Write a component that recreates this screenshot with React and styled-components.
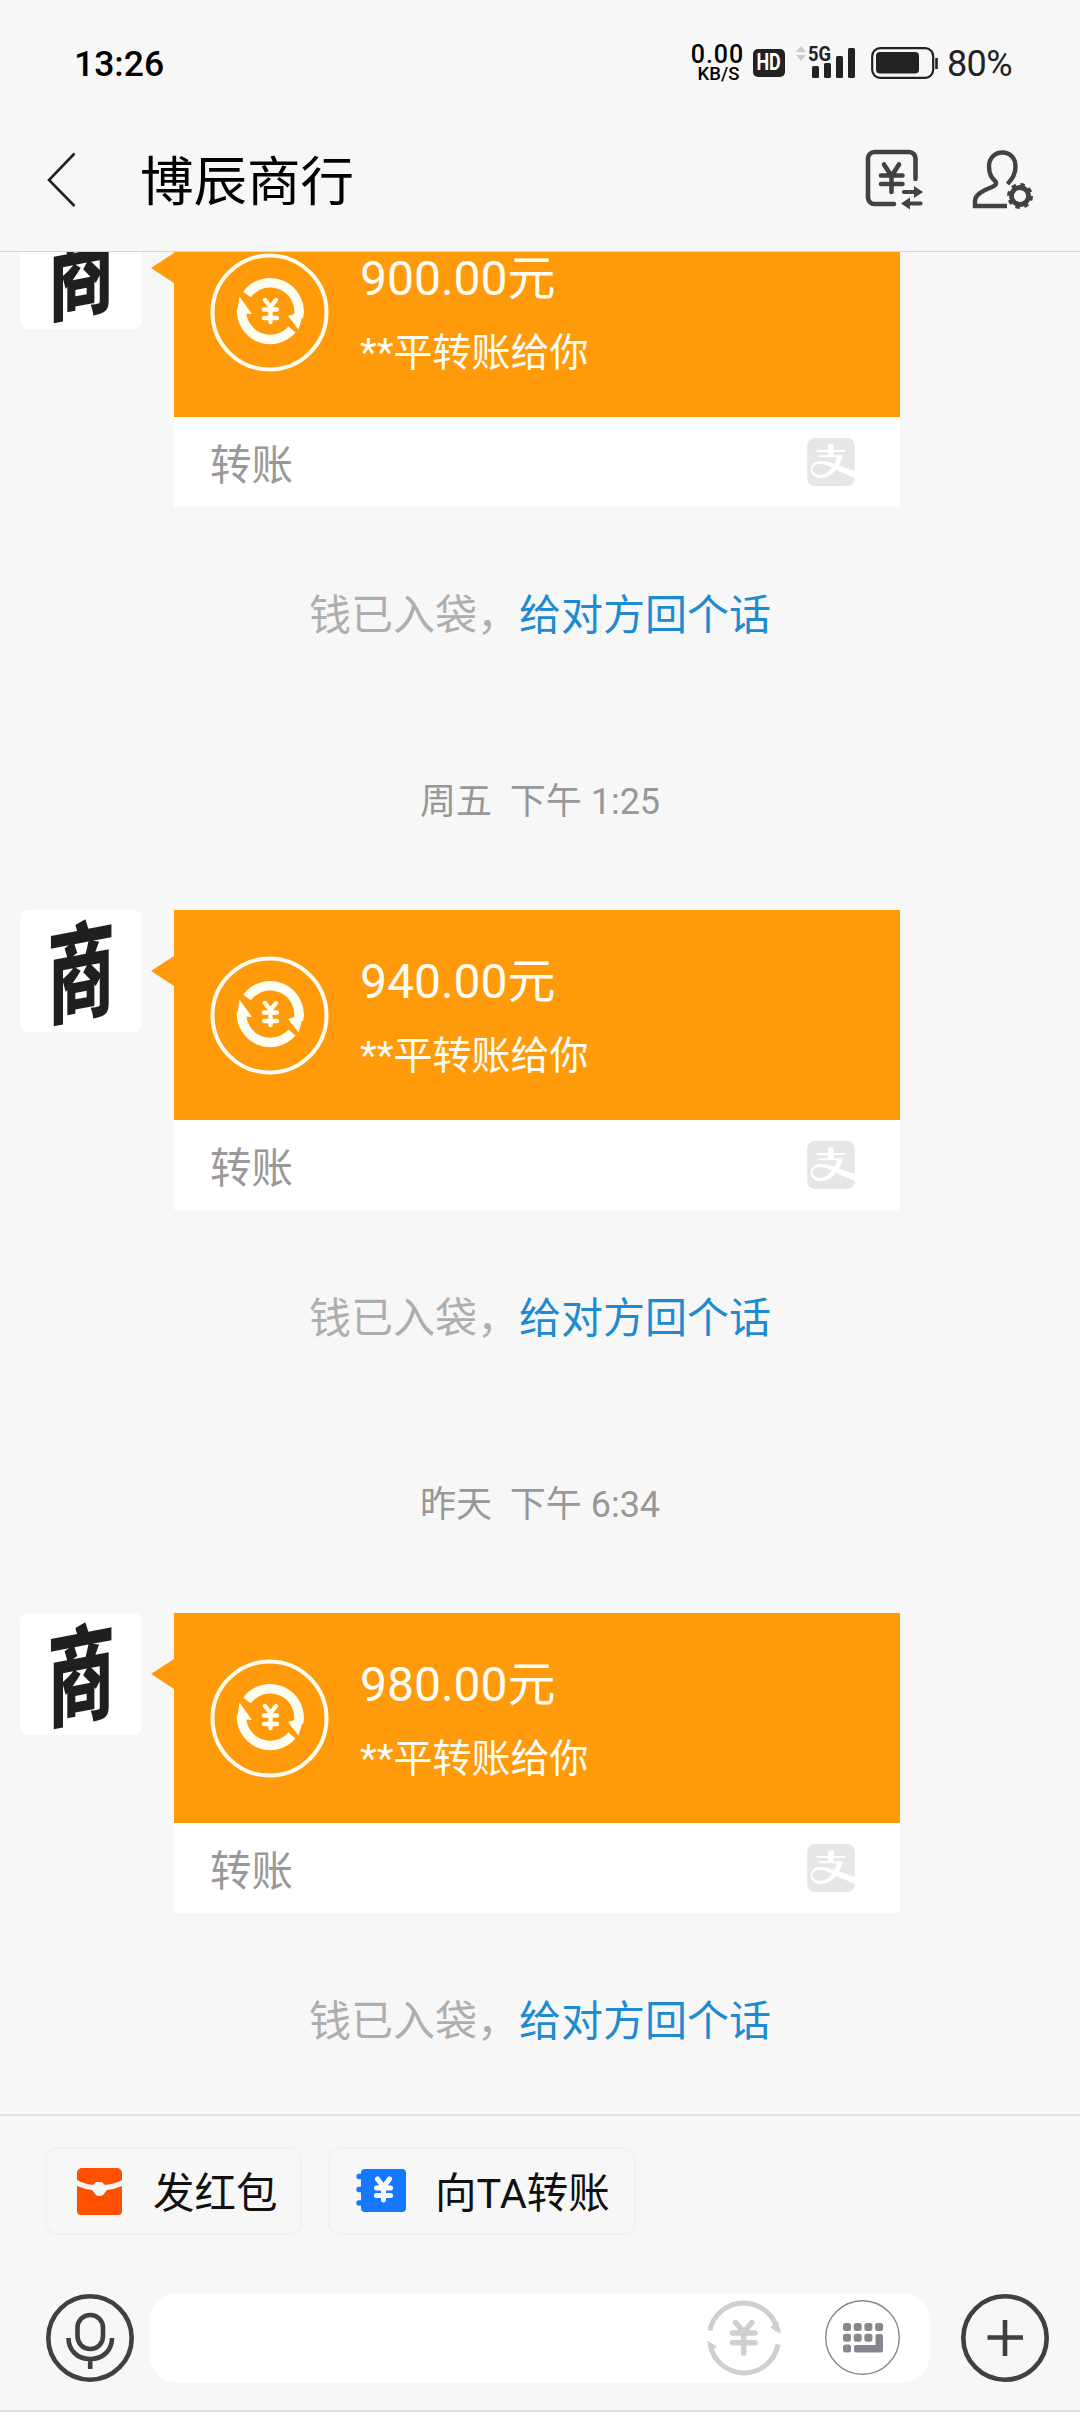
import React from 'react';
import styled, { createGlobalStyle } from 'styled-components';
import { SiAlipay } from 'react-icons/si';

const GlobalStyle = createGlobalStyle`
  * {
    box-sizing: border-box;
  }
  body {
    margin: 0;
    background: #f7f7f7;
    font-family: Roboto, "Noto Sans CJK SC", sans-serif;
  }
  svg {
    display: block;
    flex: none;
    overflow: visible;
  }
`

const Screen = styled.div`
  width: 1080px;
  height: 2412px;
  display: flex;
  flex-direction: column;
  overflow: hidden;
  background: #f7f7f7;
`

const StatusBar = styled.div`
  height: 128px;
  padding: 0 68px 0 74px;
  display: flex;
  align-items: center;
  justify-content: space-between;
`

const Clock = styled.div`
  font-size: 35.5px;
  font-weight: 500;
  color: #000;
`

const StatusRight = styled.div`
  display: flex;
  align-items: center;
`

const NetSpeed = styled.div`
  width: 53px;
  display: flex;
  flex-direction: column;
  align-items: center;
  color: #000;
  font-weight: 500;
  margin-right: 9px;
`

const SpeedValue = styled.span`
  font-size: 25px;
  line-height: 20px;
  letter-spacing: 1px;
  white-space: nowrap;
`

const SpeedUnit = styled.span`
  font-size: 18.5px;
  line-height: 18px;
  padding-left: 2px;
`

const HdBadge = styled.div`
  width: 32px;
  height: 28px;
  margin: 0 10px 2px 0;
  border-radius: 5px;
  background: #222;
  color: #fff;
  font-size: 23px;
  font-weight: 700;
  line-height: 28px;
  display: flex;
  justify-content: center;

  span {
    transform: scaleX(0.78);
  }
`

const Signal = styled.div`
  margin: 0 15px 5px 0;
`

const Battery = styled.div`
  margin-bottom: 3px;
`

const Percent = styled.div`
  margin-left: 8px;
  font-size: 36px;
  line-height: 42px;
  letter-spacing: -0.6px;
  color: #222;
`

const Header = styled.div`
  height: 124px;
  padding: 0 46px 20px 46px;
  display: flex;
  align-items: center;
  border-bottom: 1px solid #d9d9d9;
`

const Title = styled.div`
  flex: 1;
  margin-left: 63px;
  padding-top: 6px;
  font-size: 53.5px;
  line-height: 60px;
  color: #000;
`

const HeaderIcons = styled.div`
  display: flex;
  gap: 49px;
`

// scrolled to the end, so the oldest message is cut off at the top
const Chat = styled.div`
  height: 1862px;
  display: flex;
  flex-direction: column;
  justify-content: flex-end;
  overflow: hidden;
`

const Message = styled.div`
  height: 703px;
  flex: none;
  display: flex;
  flex-direction: column;
`

const Time = styled.div`
  height: 52px;
  margin: 68px 0 82px;
  line-height: 52px;
  text-align: center;
  white-space: pre;
  font-size: 36px;
  color: #989898;
`

const Row = styled.div`
  display: flex;
  align-items: flex-start;
  padding-left: 20px;
`

const Avatar = styled.div`
  width: 122px;
  height: 122px;
  border-radius: 8px;
  background: #fff;
  color: #1f1f1f;
  font-family: "Noto Sans CJK SC", sans-serif;
  font-size: 84px;
  font-weight: 900;
  line-height: 114px;
  display: flex;
  justify-content: center;
  overflow: hidden;

  span {
    transform: scale(0.8, 1.26) skewY(-7deg);
  }
`

const Tail = styled.div`
  width: 23px;
  height: 30px;
  margin: 46px 0 0 9px;
  background: #ff9a0b;
  clip-path: polygon(0 50%, 100% 0, 100% 100%);
`

const Card = styled.div`
  width: 726px;
`

const CardTop = styled.div`
  height: 210px;
  padding: 0 36px;
  display: flex;
  align-items: center;
  background: #ff9a0b;
  color: #fffdf5;
`

const CardText = styled.div`
  margin-left: 31px;
`

const Amount = styled.div`
  font-size: 48px;
  line-height: 70px;
`

const From = styled.div`
  font-size: 39px;
  line-height: 56px;
  margin-top: 11px;
`

const CardFoot = styled.div`
  height: 90px;
  padding: 0 45px 0 36px;
  display: flex;
  align-items: center;
  justify-content: space-between;
  background: #fff;
  color: #999;
  font-size: 41.5px;
`

const Tip = styled.div`
  height: 60px;
  margin-top: 75px;
  line-height: 60px;
  text-align: center;
  font-size: 42px;
  font-family: "Noto Sans CJK SC", sans-serif;
  color: #aeaeae;
`

const TipLink = styled.span`
  color: #1e8bd0;
`

const Footer = styled.div`
  height: 298px;
  border-top: 2px solid #e2e2e2;
  border-bottom: 2px solid #e0e0e0;
`

const Chips = styled.div`
  display: flex;
  gap: 26px;
  padding: 31px 0 0 45px;
`

const Chip = styled.div`
  width: ${props => props.$width}px;
  height: 88px;
  padding-left: ${props => props.$pad}px;
  border: 2px solid #f2f2f2;
  border-radius: 12px;
  display: flex;
  align-items: center;
  font-size: 41.5px;
  white-space: nowrap;
  color: #111;
`

const ChipLabel = styled.span`
  margin-left: ${props => props.$gap}px;
  padding-bottom: 2px;
`

const InputRow = styled.div`
  display: flex;
  align-items: center;
  margin-top: 58px;
  padding: 0 31px 0 46px;
`

const InputBox = styled.div`
  width: 781px;
  height: 90px;
  margin: 0 31px 0 15px;
  padding: 0 30px 2px 0;
  border-radius: 28px;
  background: #fff;
  display: flex;
  align-items: center;
  justify-content: flex-end;
  gap: 43px;
`

function BackIcon() {
  return (
    <svg width="31" height="56" viewBox="0 0 31 56" fill="none" stroke="#222" strokeWidth="2.6">
      <path d="M28.5 1.5 3 28 28.5 54" />
    </svg>
  )
}

function SignalIcon() {
  return (
    <svg width="61" height="34" viewBox="0 0 61 34" fill="#222">
      <path d="M6 1 11 7H1zM1 10h10l-5 6z" fill="#ccc" />
      <text x="13" y="16" fontSize="21" fontWeight="700" textLength="23" lengthAdjust="spacingAndGlyphs">5G</text>
      <rect x="17" y="21" width="7" height="12" rx="1.5" />
      <rect x="29" y="18" width="7" height="15" rx="1.5" />
      <rect x="41" y="11" width="7" height="22" rx="1.5" />
      <rect x="53" y="3" width="7" height="30" rx="1.5" />
    </svg>
  )
}

function BatteryIcon() {
  return (
    <svg width="68" height="32" viewBox="0 0 68 32">
      <rect x="1.2" y="1.2" width="61" height="29.6" rx="8" fill="none" stroke="#222" strokeWidth="2.2" />
      <rect x="5" y="5" width="43" height="21.5" rx="4" fill="#222" />
      <path d="M65.5 11v11" stroke="#222" strokeWidth="2.6" />
    </svg>
  )
}

function BillIcon() {
  return (
    <svg width="58" height="62" viewBox="0 0 58 62" fill="none" stroke="#424242" strokeWidth="4.6" strokeLinecap="round">
      <path d="M50.5 30V9.5A6.5 6.5 0 0 0 44 3H9.5A6.5 6.5 0 0 0 3 9.5v39A6.5 6.5 0 0 0 9.5 55H29" />
      <path d="M19 15.5 26.5 27 34 15.5M26.5 27v16M16 26.500h21.500M16 35h21.500" />
      <path d="M39 43h11M45 54.500h10.500" strokeWidth="4.200" />
      <path d="M49 37 58 43 49 49zM45 48.500 36 54.500 45 60.500z" fill="#424242" stroke="none" />
    </svg>
  )
}

function ContactIcon() {
  return (
    <svg width="62" height="62" viewBox="0 0 62 62" fill="none" stroke="#424242" strokeWidth="4.4">
      <path d="M35.5 35C40 30 43.500 26 43.500 17.500 43.500 9 38 3.500 30.500 3.500S17 9 17 17.500C17 26 20 29 23.500 32.500 25 35 23.500 36.500 20 38 10 42 3 46 3 52v5h32" />
      <circle cx="48" cy="47" r="8.500" strokeWidth="4.800" />
      <circle cx="48" cy="47" r="11" strokeWidth="4" strokeDasharray="4.300 4.340" />
    </svg>
  )
}

function TransferIcon() {
  return (
    <svg width="119" height="119" viewBox="0 0 119 119" fill="none" stroke="#fffdf0">
      <circle cx="59.5" cy="59.5" r="57" strokeWidth="4" />
      <path d="M37 41.500A28.800 28.800 0 0 1 88.500 64" strokeWidth="9.500" />
      <path d="M82 76.500A28.800 28.800 0 0 1 31.500 56" strokeWidth="9.500" />
      <path d="M78 63 94 58 88.500 76.500zM42 61 27 60 29.500 43.500z" fill="#fffdf0" stroke="none" />
      <path d="M55 47 60.500 54 66 47M60.500 54v15M54 56.500h13M54 65h13" strokeWidth="4.400" strokeLinecap="round" />
    </svg>
  )
}

function RedPacketIcon() {
  return (
    <svg width="45" height="47" viewBox="0 0 45 47" fill="#ff5000">
      <path d="M0 5a5 5 0 0 1 5-5h35a5 5 0 0 1 5 5v7q-7 4-17 5l-3-3h-6l-3 3Q7 16 0 12z" />
      <path d="M0 18q7 3 15 4l4 5q3.500 2 7 0l4-5Q38 21 45 18v25a4 4 0 0 1-4 4H4a4 4 0 0 1-4-4z" />
    </svg>
  )
}

function TransferBookIcon() {
  return (
    <svg width="51" height="44" viewBox="0 0 51 44">
      <rect x="5" y="0" width="45" height="43" rx="4" fill="#1677ff" />
      <path d="M3 7.500h5M3 20.500h5M3 34h5" stroke="#1677ff" strokeWidth="5.500" strokeLinecap="round" />
      <path d="M21.500 10 27.500 18 33.500 10M27.500 18v13M20.500 19h14M20.500 26.500h14" fill="none" stroke="#fff" strokeWidth="5" strokeLinecap="round" />
    </svg>
  )
}

function MicIcon() {
  return (
    <svg width="88" height="88" viewBox="0 0 88 88" fill="none" stroke="#404040" strokeWidth="4.600">
      <circle cx="44" cy="44" r="41.700" />
      <rect x="31.500" y="21" width="25.500" height="34" rx="12.700" />
      <path d="M22.500 44c0 12 8.500 21 21.700 21S66 56 66 44M44.200 65v10" />
    </svg>
  )
}

function YenIcon() {
  return (
    <svg width="76" height="76" viewBox="0 0 76 76" fill="none" stroke="#cfcfcf" strokeWidth="5">
      <path d="M3.800 31.500A34.500 34.500 0 0 1 71.500 32M72 45.500A34.500 34.500 0 0 1 4 45" />
      <path d="M64 28.500 72 22 75 35zM1 41.500 11 47.500 5 53z" fill="#cfcfcf" stroke="none" />
      <path d="M29.500 23.500 37.700 33 46 23.500M37.700 33v21M26.500 34h22.500M26.500 43.800h22.500" strokeWidth="5.500" strokeLinecap="round" />
    </svg>
  )
}

function KeyboardIcon() {
  const keys = [[0, 0], [1, 0], [2, 0], [3, 0], [0, 1], [1, 1], [2, 1], [0, 2]]
  return (
    <svg width="75" height="75" viewBox="0 0 75 75" fill="#888">
      <circle cx="37.500" cy="37.500" r="36.800" fill="none" stroke="#888" strokeWidth="1.400" />
      {keys.map(([x, y]) => (
        <rect key={`${x}-${y}`} x={18 + x * 10.7} y={23 + y * 10.8} width="8" height="8" rx="2.5" />
      ))}
      <path d="M50.500 36a2 2 0 0 1 2-2h3.500a2 2 0 0 1 2 2v14.500a2 2 0 0 1-2 2H31a2 2 0 0 1-2-2V47a2 2 0 0 1 2-2h19.500z" fill="#868690" />
    </svg>
  )
}

function PlusIcon() {
  return (
    <svg width="88" height="88" viewBox="0 0 88 88" fill="none" stroke="#404040" strokeWidth="4.600">
      <circle cx="44" cy="44" r="41.700" />
      <path d="M26.500 43.500H62M44 26v36" />
    </svg>
  )
}

const messages = [
  { time: '', amount: '900.00元' },
  { time: '周五  下午 1:25', amount: '940.00元' },
  { time: '昨天  下午 6:34', amount: '980.00元' },
]

export default function App() {
  return (
    <Screen>
      <GlobalStyle />
      <StatusBar>
        <Clock>13:26</Clock>
        <StatusRight>
          <NetSpeed>
            <SpeedValue>0.00</SpeedValue>
            <SpeedUnit>KB/S</SpeedUnit>
          </NetSpeed>
          <HdBadge><span>HD</span></HdBadge>
          <Signal><SignalIcon /></Signal>
          <Battery><BatteryIcon /></Battery>
          <Percent>80%</Percent>
        </StatusRight>
      </StatusBar>

      <Header>
        <BackIcon />
        <Title>博辰商行</Title>
        <HeaderIcons>
          <BillIcon />
          <ContactIcon />
        </HeaderIcons>
      </Header>

      <Chat>
        {messages.map(item => (
          <Message key={item.amount}>
            <Time>{item.time}</Time>
            <Row>
              <Avatar><span>商</span></Avatar>
              <Tail />
              <Card>
                <CardTop>
                  <TransferIcon />
                  <CardText>
                    <Amount>{item.amount}</Amount>
                    <From>**平转账给你</From>
                  </CardText>
                </CardTop>
                <CardFoot>
                  转账
                  <SiAlipay size={48} color="#e6e6e9" />
                </CardFoot>
              </Card>
            </Row>
            <Tip>钱已入袋，<TipLink>给对方回个话</TipLink></Tip>
          </Message>
        ))}
      </Chat>

      <Footer>
        <Chips>
          <Chip $width={257} $pad={30}>
            <RedPacketIcon />
            <ChipLabel $gap={31}>发红包</ChipLabel>
          </Chip>
          <Chip $width={308} $pad={26}>
            <TransferBookIcon />
            <ChipLabel $gap={28}>向TA转账</ChipLabel>
          </Chip>
        </Chips>
        <InputRow>
          <MicIcon />
          <InputBox>
            <YenIcon />
            <KeyboardIcon />
          </InputBox>
          <PlusIcon />
        </InputRow>
      </Footer>
    </Screen>
  )
}
